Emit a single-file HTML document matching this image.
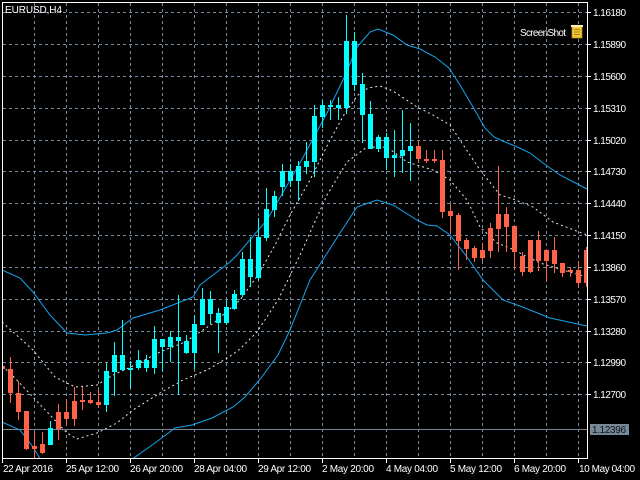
<!DOCTYPE html>
<html><head><meta charset="utf-8"><style>
html,body{margin:0;padding:0;background:#000;}
svg{display:block;}
text{font-family:"Liberation Sans",sans-serif;font-size:10px;fill:#fff;}
</style></head><body>
<svg width="640" height="480" viewBox="0 0 640 480" xmlns="http://www.w3.org/2000/svg">
<rect width="640" height="480" fill="#000"/>
<defs><clipPath id="c"><rect x="3" y="3" width="584" height="455"/></clipPath></defs>
<g stroke="#7a8ca0" stroke-width="1" stroke-dasharray="3,3" fill="none">
<path d="M34.5 3V458M66.5 3V458M98.5 3V458M130.5 3V458M162.5 3V458M194.5 3V458M226.5 3V458M258.5 3V458M290.5 3V458M322.5 3V458M354.5 3V458M386.5 3V458M418.5 3V458M450.5 3V458M482.5 3V458M514.5 3V458M546.5 3V458M578.5 3V458"/>
<path d="M3 12.5H587M3 44.5H587M3 76.5H587M3 108.5H587M3 140.5H587M3 171.5H587M3 203.5H587M3 235.5H587M3 267.5H587M3 299.5H587M3 331.5H587M3 362.5H587M3 394.5H587"/>
</g>
<line x1="3" y1="429.5" x2="587" y2="429.5" stroke="#778899" stroke-width="1"/>
<g clip-path="url(#c)">
<g fill="none" stroke="#14a6ee" stroke-width="1">
<polyline points="2,270 20,278 33,292 50,315 67,333 85,335 107,333 117,330 133,318 160,310 193,297 200,285 230,262 237,255 267,220 300,163 327,113 343,80 357,47 370,32 378,29 393,35 407,45 420,49 435,57 449,68 460,85 473,107 485,128 494,137 505,142 515,146 530,153 543,163 560,175 587,189"/>
<polyline points="2,422 20,430 33,447 42,462"/>
<polyline points="128,462 155,443 175,428 192,425 212,418 233,407 245,397 261,378 278,355 290,330 310,280 340,233 357,207 377,200 393,205 417,220 427,225 437,226 450,235 467,257 483,280 503,300 520,306 550,318 587,326"/>
</g>
<g fill="none" stroke="#e8e8e8" stroke-width="1" stroke-dasharray="2,3">
<polyline points="2,322 33,350 55,377 75,387 97,385 113,375 135,365 160,352 185,342 200,332 215,322 240,300 258,275 275,245 290,215 310,180 330,140 345,113 358,95 368,88 380,86 393,91 417,107 433,115 450,125 460,140 480,170 500,195 513,199 533,207 553,222 587,235"/>
<polyline points="2,366 10,373 33,397 50,415 67,433 77,439 97,433 117,423 133,410 160,393 183,380 207,370 229,357 240,349 257,332 278,300 300,255 327,195 347,162 367,147 387,147 407,162 433,170 450,180 467,200 480,227 497,243 510,248 540,263 573,273 587,277"/>
</g>
<g fill="#ff6347">
<rect x="2" y="360" width="1" height="12"/><rect x="0" y="366" width="5" height="3"/>
<rect x="10" y="357" width="1" height="46"/><rect x="8" y="369" width="5" height="24"/>
<rect x="18" y="381" width="1" height="39"/><rect x="16" y="393" width="5" height="19"/>
<rect x="26" y="411" width="1" height="39"/><rect x="24" y="411" width="5" height="38"/>
<rect x="34" y="432" width="1" height="27"/><rect x="32" y="446" width="5" height="3"/>
<rect x="42" y="432" width="1" height="22"/><rect x="40" y="444" width="5" height="9"/>
<rect x="58" y="404" width="1" height="36"/><rect x="56" y="412" width="5" height="17"/>
<rect x="66" y="399" width="1" height="27"/><rect x="64" y="412" width="5" height="7"/>
<rect x="74" y="387" width="1" height="39"/><rect x="72" y="401" width="5" height="18"/>
<rect x="82" y="387" width="1" height="23"/><rect x="80" y="400" width="5" height="2"/>
<rect x="90" y="392" width="1" height="12"/><rect x="88" y="400" width="5" height="3"/>
<rect x="98" y="390" width="1" height="18"/><rect x="96" y="402" width="5" height="3"/>
<rect x="418" y="140" width="1" height="23"/><rect x="416" y="146" width="5" height="13"/>
<rect x="426" y="150" width="1" height="13"/><rect x="424" y="159" width="5" height="2"/>
<rect x="434" y="150" width="1" height="13"/><rect x="432" y="159" width="5" height="2"/>
<rect x="442" y="150" width="1" height="68"/><rect x="440" y="160" width="5" height="52"/>
<rect x="450" y="204" width="1" height="29"/><rect x="448" y="211" width="5" height="5"/>
<rect x="458" y="213" width="1" height="57"/><rect x="456" y="215" width="5" height="26"/>
<rect x="466" y="238" width="1" height="22"/><rect x="464" y="240" width="5" height="9"/>
<rect x="474" y="246" width="1" height="16"/><rect x="472" y="248" width="5" height="10"/>
<rect x="482" y="243" width="1" height="18"/><rect x="480" y="250" width="5" height="8"/>
<rect x="490" y="223" width="1" height="35"/><rect x="488" y="228" width="5" height="23"/>
<rect x="498" y="166" width="1" height="86"/><rect x="496" y="214" width="5" height="15"/>
<rect x="506" y="207" width="1" height="45"/><rect x="504" y="214" width="5" height="13"/>
<rect x="514" y="226" width="1" height="43"/><rect x="512" y="226" width="5" height="26"/>
<rect x="522" y="252" width="1" height="24"/><rect x="520" y="256" width="5" height="16"/>
<rect x="530" y="240" width="1" height="33"/><rect x="528" y="240" width="5" height="32"/>
<rect x="538" y="231" width="1" height="40"/><rect x="536" y="240" width="5" height="21"/>
<rect x="546" y="250" width="1" height="31"/><rect x="544" y="250" width="5" height="11"/>
<rect x="554" y="237" width="1" height="36"/><rect x="552" y="250" width="5" height="14"/>
<rect x="562" y="263" width="1" height="14"/><rect x="560" y="263" width="5" height="10"/>
<rect x="570" y="267" width="1" height="10"/><rect x="568" y="270" width="5" height="2"/>
<rect x="578" y="261" width="1" height="26"/><rect x="576" y="270" width="5" height="13"/>
<rect x="586" y="247" width="1" height="40"/><rect x="584" y="250" width="5" height="33"/>
</g>
<g fill="#00ffff">
<rect x="50" y="421" width="1" height="24"/><rect x="48" y="428" width="5" height="17"/>
<rect x="106" y="363" width="1" height="49"/><rect x="104" y="371" width="5" height="34"/>
<rect x="114" y="342" width="1" height="54"/><rect x="112" y="355" width="5" height="17"/>
<rect x="122" y="320" width="1" height="51"/><rect x="120" y="355" width="5" height="15"/>
<rect x="130" y="361" width="1" height="27"/><rect x="128" y="368" width="5" height="2"/>
<rect x="138" y="350" width="1" height="20"/><rect x="136" y="360" width="5" height="8"/>
<rect x="146" y="355" width="1" height="17"/><rect x="144" y="360" width="5" height="8"/>
<rect x="154" y="326" width="1" height="48"/><rect x="152" y="339" width="5" height="29"/>
<rect x="162" y="339" width="1" height="33"/><rect x="160" y="339" width="5" height="8"/>
<rect x="170" y="331" width="1" height="31"/><rect x="168" y="337" width="5" height="10"/>
<rect x="178" y="295" width="1" height="100"/><rect x="176" y="337" width="5" height="4"/>
<rect x="186" y="335" width="1" height="19"/><rect x="184" y="341" width="5" height="12"/>
<rect x="194" y="315" width="1" height="54"/><rect x="192" y="324" width="5" height="29"/>
<rect x="202" y="288" width="1" height="37"/><rect x="200" y="299" width="5" height="26"/>
<rect x="210" y="291" width="1" height="33"/><rect x="208" y="299" width="5" height="15"/>
<rect x="218" y="308" width="1" height="45"/><rect x="216" y="313" width="5" height="10"/>
<rect x="226" y="300" width="1" height="25"/><rect x="224" y="307" width="5" height="16"/>
<rect x="234" y="290" width="1" height="20"/><rect x="232" y="294" width="5" height="15"/>
<rect x="242" y="252" width="1" height="45"/><rect x="240" y="259" width="5" height="36"/>
<rect x="250" y="237" width="1" height="50"/><rect x="248" y="259" width="5" height="18"/>
<rect x="258" y="218" width="1" height="62"/><rect x="256" y="237" width="5" height="41"/>
<rect x="266" y="188" width="1" height="53"/><rect x="264" y="209" width="5" height="29"/>
<rect x="274" y="191" width="1" height="26"/><rect x="272" y="196" width="5" height="14"/>
<rect x="282" y="164" width="1" height="32"/><rect x="280" y="171" width="5" height="16"/>
<rect x="290" y="164" width="1" height="23"/><rect x="288" y="171" width="5" height="10"/>
<rect x="298" y="161" width="1" height="40"/><rect x="296" y="166" width="5" height="15"/>
<rect x="306" y="142" width="1" height="32"/><rect x="304" y="161" width="5" height="6"/>
<rect x="314" y="105" width="1" height="72"/><rect x="312" y="116" width="5" height="46"/>
<rect x="322" y="100" width="1" height="28"/><rect x="320" y="105" width="5" height="12"/>
<rect x="330" y="100" width="1" height="20"/><rect x="328" y="105" width="5" height="2"/>
<rect x="338" y="97" width="1" height="23"/><rect x="336" y="105" width="5" height="3"/>
<rect x="346" y="15" width="1" height="99"/><rect x="344" y="41" width="5" height="67"/>
<rect x="354" y="32" width="1" height="59"/><rect x="352" y="41" width="5" height="44"/>
<rect x="362" y="73" width="1" height="70"/><rect x="360" y="84" width="5" height="31"/>
<rect x="370" y="101" width="1" height="48"/><rect x="368" y="114" width="5" height="35"/>
<rect x="378" y="135" width="1" height="17"/><rect x="376" y="137" width="5" height="12"/>
<rect x="386" y="133" width="1" height="37"/><rect x="384" y="137" width="5" height="21"/>
<rect x="394" y="130" width="1" height="47"/><rect x="392" y="155" width="5" height="3"/>
<rect x="402" y="110" width="1" height="63"/><rect x="400" y="150" width="5" height="6"/>
<rect x="410" y="123" width="1" height="58"/><rect x="408" y="146" width="5" height="5"/>
</g>
</g>
<g stroke="#fff" stroke-width="1" fill="none">
<path d="M2.5 2.5H587.5V458.5H2.5Z"/>
<path d="M587 12.5h4M587 44.5h4M587 76.5h4M587 108.5h4M587 140.5h4M587 171.5h4M587 203.5h4M587 235.5h4M587 267.5h4M587 299.5h4M587 331.5h4M587 362.5h4M587 394.5h4"/>
<path d="M2.5 458v5M66.5 458v5M130.5 458v5M194.5 458v5M258.5 458v5M322.5 458v5M386.5 458v5M450.5 458v5M514.5 458v5M578.5 458v5"/>
</g>
<text x="5" y="13" textLength="57">EURUSD,H4</text>
<text x="520" y="36" textLength="46">ScreenShot</text>
<rect x="572" y="26" width="10" height="12" fill="#f3c83a" stroke="#b08a20" stroke-width="0.8"/>
<path d="M574 29.5h6M574 32h6M574 34.5h6" stroke="#8a6a10" stroke-width="0.8"/>
<rect x="571" y="25" width="12" height="2" fill="#fff1b0"/>
<text x="593" y="16" textLength="33">1.16180</text>
<text x="593" y="48" textLength="33">1.15890</text>
<text x="593" y="80" textLength="33">1.15600</text>
<text x="593" y="112" textLength="33">1.15310</text>
<text x="593" y="144" textLength="33">1.15020</text>
<text x="593" y="175" textLength="33">1.14730</text>
<text x="593" y="207" textLength="33">1.14440</text>
<text x="593" y="239" textLength="33">1.14150</text>
<text x="593" y="271" textLength="33">1.13860</text>
<text x="593" y="303" textLength="33">1.13570</text>
<text x="593" y="335" textLength="33">1.13280</text>
<text x="593" y="366" textLength="33">1.12990</text>
<text x="593" y="398" textLength="33">1.12700</text>
<rect x="590" y="424" width="39" height="11" fill="#778899"/>
<text x="592" y="433" textLength="34" style="fill:#111">1.12396</text>
<text x="3" y="472" textLength="50">22 Apr 2016</text>
<text x="66" y="472" textLength="53">25 Apr 12:00</text>
<text x="130" y="472" textLength="53">26 Apr 20:00</text>
<text x="194" y="472" textLength="53">28 Apr 04:00</text>
<text x="258" y="472" textLength="53">29 Apr 12:00</text>
<text x="322" y="472" textLength="52">2 May 20:00</text>
<text x="386" y="472" textLength="52">4 May 04:00</text>
<text x="450" y="472" textLength="52">5 May 12:00</text>
<text x="514" y="472" textLength="52">6 May 20:00</text>
<text x="579" y="472" textLength="56">10 May 04:00</text>
</svg>
</body></html>
